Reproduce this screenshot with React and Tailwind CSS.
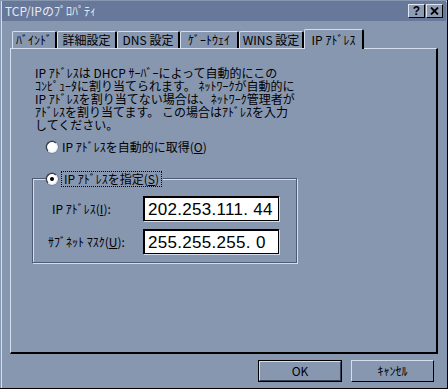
import React from "react";

const FONT = { fontFamily: '"Noto Sans CJK JP", "Noto Sans", sans-serif' };

function Radio({ checked }) {
  return (
    <div className="w-[12px] h-[12px] rounded-full bg-white border border-[#2a2f3a] border-r-[#dfe7f3] border-b-[#dfe7f3] flex items-center justify-center shadow-[0_0_0_0.5px_#5a6478]">
      {checked && <div className="w-[4px] h-[4px] rounded-full bg-black" />}
    </div>
  );
}

function Tab({ label, w, selected }) {
  if (selected) {
    return (
      <div
        className="relative z-10 -mb-px h-[20px] flex items-center justify-center bg-[#8797b0] border-l border-t border-[#d4deee] border-r-2 border-r-black rounded-t-[2px]"
        style={{ width: w }}
      >
        <span className="text-[12px] leading-none text-black">{label}</span>
      </div>
    );
  }
  return (
    <div
      className="h-[17px] flex items-center justify-center border-l border-t border-[#d4deee] border-r-2 border-r-black rounded-t-[2px]"
      style={{ width: w }}
    >
      <span className="text-[12px] leading-none text-black">{label}</span>
    </div>
  );
}

export default function App() {
  return (
    <div
      className="w-[448px] h-[389px] bg-[#8797b0] flex flex-col shadow-[inset_-1px_-1px_0_#000,inset_1px_1px_0_#8797b0,inset_2px_2px_0_#d4deee] text-black"
      style={FONT}
    >
      {/* Title bar */}
      <div className="mx-[2px] mt-px h-[20px] bg-[#67789a] flex items-center pl-[3px] pr-[3px]">
        <span className="text-[12px] leading-none text-[#e6eaf2] flex-1">TCP/IPのﾌﾟﾛﾊﾟﾃｨ</span>
        <div className="flex gap-[1px]">
          <div className="w-[17px] h-[14px] bg-[#8d9cb5] border border-[#dfe7f3] border-r-black border-b-black flex items-center justify-center">
            <span className="text-[12px] font-bold leading-none" style={{ fontFamily: '"Liberation Sans", sans-serif' }}>?</span>
          </div>
          <div className="w-[17px] h-[14px] bg-[#8d9cb5] border border-[#dfe7f3] border-r-black border-b-black flex items-center justify-center">
            <svg width="9" height="8" viewBox="0 0 9 8">
              <path d="M1 0.5 L8 7.5 M8 0.5 L1 7.5" stroke="black" strokeWidth="1.8" />
            </svg>
          </div>
        </div>
      </div>

      {/* Tabs */}
      <div className="mt-[7px] ml-[12px] flex items-end h-[20px]">
        <Tab label="ﾊﾞｲﾝﾄﾞ" w={45} />
        <Tab label="詳細設定" w={60} />
        <Tab label="DNS 設定" w={63} />
        <Tab label="ｹﾞｰﾄｳｪｲ" w={59} />
        <Tab label="WINS 設定" w={65} />
        <Tab label="IP ｱﾄﾞﾚｽ" w={60} selected />
      </div>

      {/* Panel */}
      <div className="ml-[10px] w-[428px] h-[306px] border-l border-t border-[#d4deee] border-r-2 border-r-black border-b-2 border-b-black flex flex-col">
        <div className="pl-[24px] pt-[17px] text-[12px] leading-[13px] whitespace-pre">
          <div>IP ｱﾄﾞﾚｽは DHCP ｻｰﾊﾞｰによって自動的にこの</div>
          <div>ｺﾝﾋﾟｭｰﾀに割り当てられます。 ﾈｯﾄﾜｰｸが自動的に</div>
          <div>IP ｱﾄﾞﾚｽを割り当てない場合は、ﾈｯﾄﾜｰｸ管理者が</div>
          <div>ｱﾄﾞﾚｽを割り当てます。 この場合はｱﾄﾞﾚｽを入力</div>
          <div>してください。</div>
        </div>

        <div className="mt-[9px] ml-[35px] flex items-center h-[13px]">
          <Radio />
          <span className="ml-[4px] text-[12px] leading-none">
            IP ｱﾄﾞﾚｽを自動的に取得(<span className="underline">O</span>)
          </span>
        </div>

        {/* Group box */}
        <div className="relative mt-[25px] ml-[21px] w-[265px] h-[85px] border border-[#505a70] shadow-[1px_1px_0_#d4deee,inset_1px_1px_0_#d4deee]">
          <div className="absolute -top-[8px] left-[13px] flex items-center bg-[#8797b0] pr-[1px]">
            <Radio checked />
            <div className="ml-[3px] h-[16px] px-[2px] flex items-center border border-dotted border-black">
              <span className="text-[12px] leading-none">
                IP ｱﾄﾞﾚｽを指定(<span className="underline">S</span>)
              </span>
            </div>
          </div>

          <div className="mt-[17px] flex items-center">
            <span className="w-[110px] pl-[19px] text-[12px] leading-none">
              IP ｱﾄﾞﾚｽ(<span className="underline">I</span>):
            </span>
            <div className="w-[136px] h-[25px] bg-white border-2 border-black border-r border-b shadow-[1px_1px_0_#d4deee] flex items-center pl-[3px]">
              <span className="text-[17px] leading-none tracking-[0.3px]" style={{ fontFamily: '"Liberation Sans", sans-serif' }}>
                202.253.111. 44
              </span>
            </div>
          </div>

          <div className="mt-[8px] flex items-center">
            <span className="w-[110px] pl-[15px] text-[12px] leading-none">
              ｻﾌﾞﾈｯﾄ ﾏｽｸ(<span className="underline">U</span>):
            </span>
            <div className="w-[136px] h-[25px] bg-white border-2 border-black border-r border-b shadow-[1px_1px_0_#d4deee] flex items-center pl-[3px]">
              <span className="text-[17px] leading-none tracking-[0.3px]" style={{ fontFamily: '"Liberation Sans", sans-serif' }}>
                255.255.255. 0
              </span>
            </div>
          </div>
        </div>
      </div>

      {/* Buttons */}
      <div className="mt-[6px] flex justify-end gap-[9px] pr-[14px]">
        <div className="w-[84px] h-[22px] border border-black flex">
          <div className="flex-1 border border-[#d4deee] border-r-[#3a4252] border-b-[#3a4252] flex items-center justify-center">
            <span className="text-[12px] leading-none">OK</span>
          </div>
        </div>
        <div className="w-[83px] h-[22px] border border-[#d4deee] border-r-black border-b-black flex items-center justify-center">
          <span className="text-[12px] leading-none">ｷｬﾝｾﾙ</span>
        </div>
      </div>
    </div>
  );
}
